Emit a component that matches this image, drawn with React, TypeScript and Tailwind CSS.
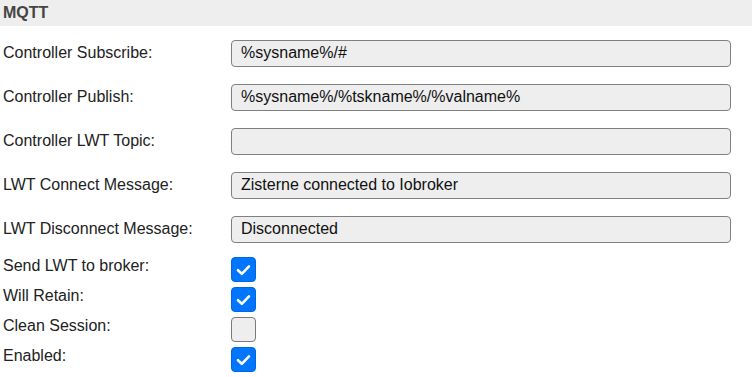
import React from 'react';

const textRows = [
  { label: 'Controller Subscribe:', value: '%sysname%/#' },
  { label: 'Controller Publish:', value: '%sysname%/%tskname%/%valname%' },
  { label: 'Controller LWT Topic:', value: '' },
  { label: 'LWT Connect Message:', value: 'Zisterne connected to Iobroker' },
  { label: 'LWT Disconnect Message:', value: 'Disconnected' },
];

const checkRows = [
  { label: 'Send LWT to broker:', checked: true },
  { label: 'Will Retain:', checked: true },
  { label: 'Clean Session:', checked: false },
  { label: 'Enabled:', checked: true },
];

const Check: React.FC<{ checked: boolean }> = ({ checked }) =>
  checked ? (
    <div className="w-[25px] h-[25px] rounded-[4px] bg-[#0075ff] border border-[#0067e0] flex items-center justify-center">
      <svg width="15" height="12" viewBox="0 0 15 12">
        <path d="M2 6.2 L5.8 9.8 L13 2.4" fill="none" stroke="white" strokeWidth="2.6" strokeLinecap="round" strokeLinejoin="round" />
      </svg>
    </div>
  ) : (
    <div className="w-[25px] h-[25px] rounded-[4px] bg-[#eeeeee] border border-[#7a7a7a]" />
  );

export default function App() {
  return (
    <div className="w-[752px] h-[377px] bg-white overflow-hidden font-['Liberation_Sans',Arial,sans-serif] text-[16px] text-[#222]">
      <div className="h-[26px] bg-[#eeeeee] flex items-center px-[3px]">
        <span className="font-bold text-[#444] text-[16px]">MQTT</span>
      </div>
      <div className="mt-[5px]">
        {textRows.map((r) => (
          <div key={r.label} className="h-[44px] flex items-center">
            <div className="w-[231px] pl-[3px]">{r.label}</div>
            <div className="w-[500px] h-[27px] rounded-[4px] bg-[#eeeeee] border border-[#808080] flex items-center px-[9px] text-[#111]">
              {r.value}
            </div>
          </div>
        ))}
      </div>
      <div className="mt-[3px]">
        {checkRows.map((r) => (
          <div key={r.label} className="h-[30px] flex items-start">
            <div className="w-[231px] pl-[3px] leading-[18px] pt-[3px]">{r.label}</div>
            <div className="pt-[3px]">
              <Check checked={r.checked} />
            </div>
          </div>
        ))}
      </div>
    </div>
  );
}
